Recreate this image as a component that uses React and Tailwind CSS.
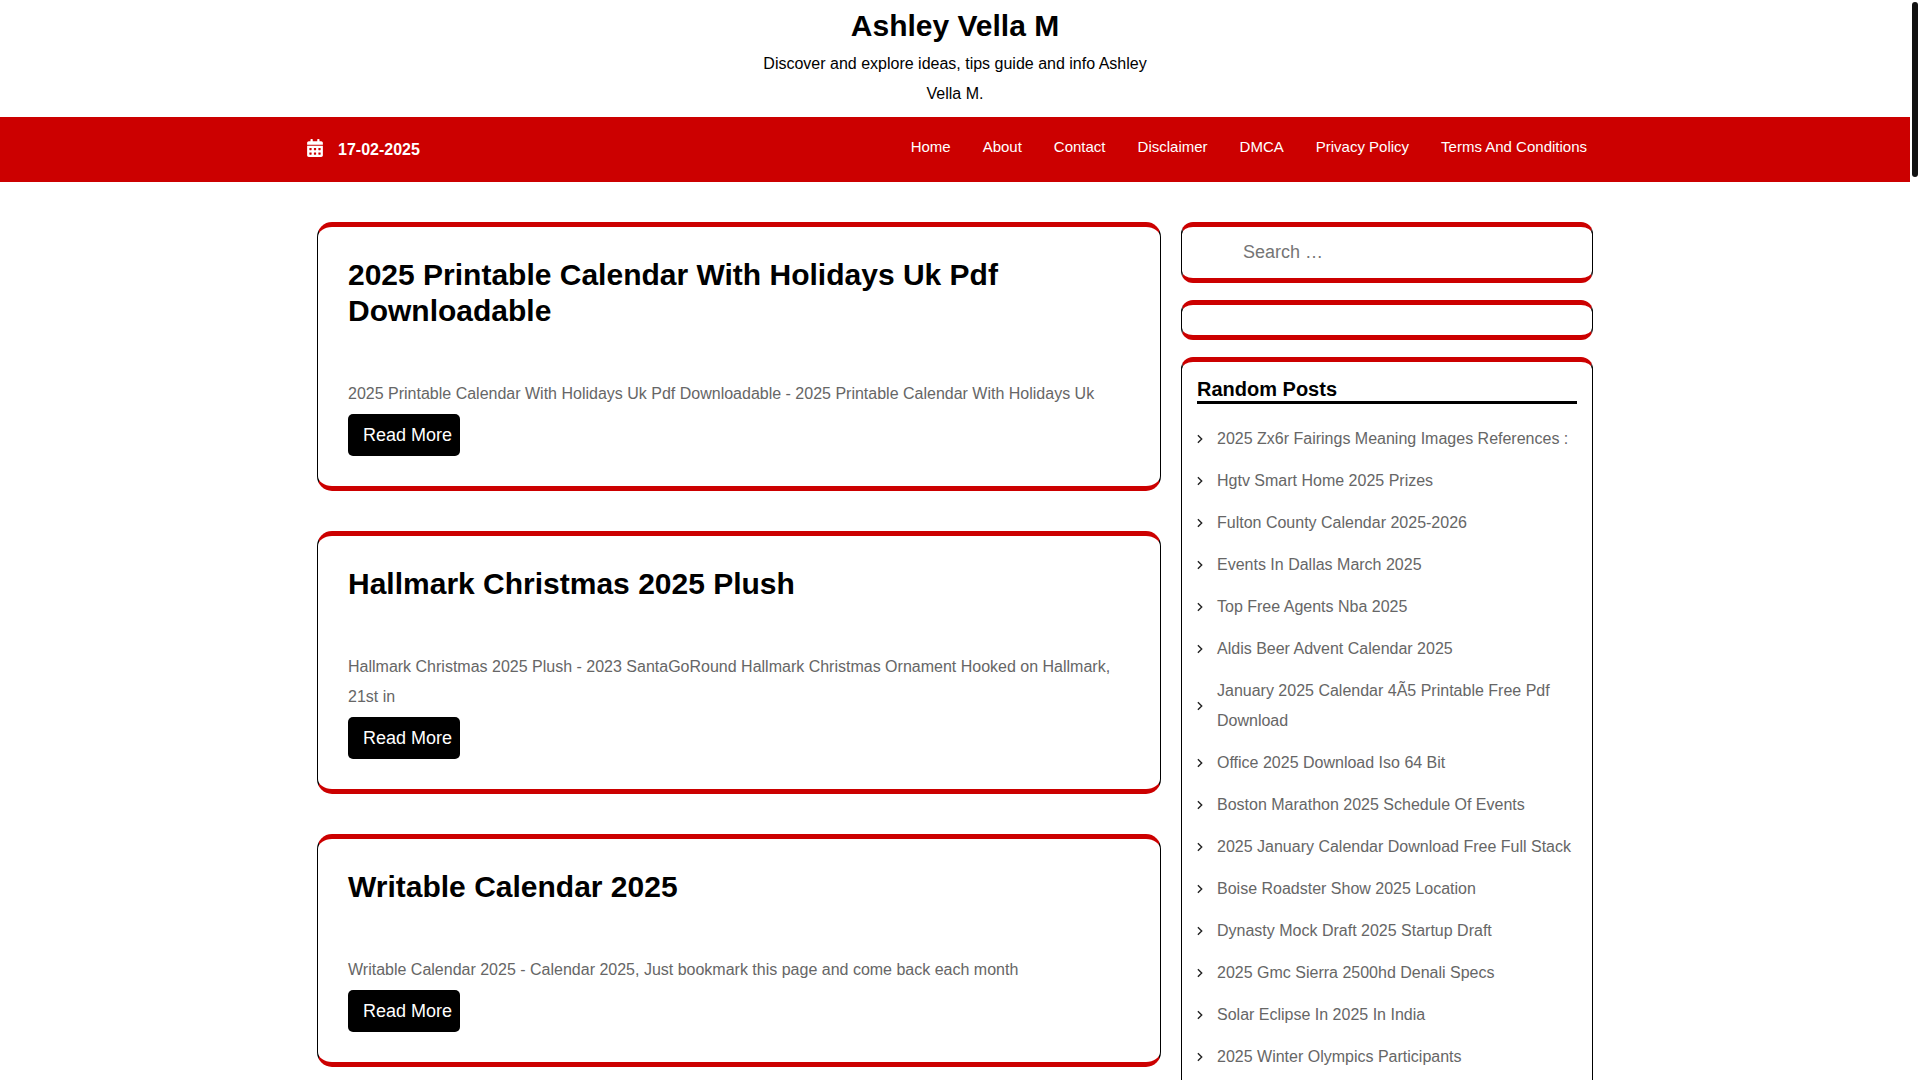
import { FaCalendarAlt } from "react-icons/fa";

const menu = [
  "Home",
  "About",
  "Contact",
  "Disclaimer",
  "DMCA",
  "Privacy Policy",
  "Terms And Conditions",
];

const posts = [
  {
    title: "2025 Printable Calendar With Holidays Uk Pdf Downloadable",
    excerpt:
      "2025 Printable Calendar With Holidays Uk Pdf Downloadable - 2025 Printable Calendar With Holidays Uk",
  },
  {
    title: "Hallmark Christmas 2025 Plush",
    excerpt:
      "Hallmark Christmas 2025 Plush - 2023 SantaGoRound Hallmark Christmas Ornament Hooked on Hallmark, 21st in",
  },
  {
    title: "Writable Calendar 2025",
    excerpt:
      "Writable Calendar 2025 - Calendar 2025, Just bookmark this page and come back each month",
  },
];

const randomPosts = [
  "2025 Zx6r Fairings Meaning Images References :",
  "Hgtv Smart Home 2025 Prizes",
  "Fulton County Calendar 2025-2026",
  "Events In Dallas March 2025",
  "Top Free Agents Nba 2025",
  "Aldis Beer Advent Calendar 2025",
  "January 2025 Calendar 4Ã5 Printable Free Pdf Download",
  "Office 2025 Download Iso 64 Bit",
  "Boston Marathon 2025 Schedule Of Events",
  "2025 January Calendar Download Free Full Stack",
  "Boise Roadster Show 2025 Location",
  "Dynasty Mock Draft 2025 Startup Draft",
  "2025 Gmc Sierra 2500hd Denali Specs",
  "Solar Eclipse In 2025 In India",
  "2025 Winter Olympics Participants",
];

function Header() {
  return (
    <header>
      <div className="mx-auto max-w-[408px] py-2 text-center text-black">
        <h1 className="mb-[5px] text-[30px] leading-9 font-bold">
          <a href="#">Ashley Vella M</a>
        </h1>
        <p className="text-base leading-[30px]">
          Discover and explore ideas, tips guide and info Ashley Vella M.
        </p>
      </div>
      <div className="bg-[#cc0000] text-white">
        <div className="mx-auto flex min-h-[65px] max-w-[1320px] items-center justify-between px-3">
          <div className="flex items-center gap-[15px] text-base leading-[30px] font-bold">
            <FaCalendarAlt className="mb-[3px] h-[18px] w-4" />
            <span>17-02-2025</span>
          </div>
          <nav className="pb-[5px]">
            <ul className="flex flex-wrap text-[15px] leading-[30px]">
              {menu.map((item) => (
                <li key={item}>
                  <a href="#" className="block px-4">
                    {item}
                  </a>
                </li>
              ))}
            </ul>
          </nav>
        </div>
      </div>
    </header>
  );
}

function PostCard({ title, excerpt }) {
  return (
    <article className="rounded-[15px] border-x border-y-[5px] border-x-black border-y-[#cc0000] p-[30px]">
      <h2 className="mb-[50px] text-[30px] leading-9 font-bold text-black">
        <a href="#">{title}</a>
      </h2>
      <p className="mb-[5px] text-base leading-[30px] text-[#666666]">
        {excerpt}
      </p>
      <a
        href="#"
        className="block w-fit rounded-[5px] bg-black py-[6px] pr-2 pl-[15px] text-lg leading-[30px] text-white"
      >
        Read More
      </a>
    </article>
  );
}

function Widget({ children }) {
  return (
    <section className="rounded-xl border-x border-y-[5px] border-x-black border-y-[#cc0000] p-[15px]">
      {children}
    </section>
  );
}

function Chevron() {
  return (
    <svg
      viewBox="0 0 6 10"
      className="h-[10px] w-[6px] shrink-0"
      fill="none"
      stroke="#222222"
      strokeWidth="1.4"
      aria-hidden="true"
    >
      <path d="M0.9 1.2 L4.7 5 L0.9 8.8" />
    </svg>
  );
}

function Sidebar() {
  return (
    <aside className="flex w-1/3 flex-col gap-[17px] px-[10px]">
      <Widget>
        <form role="search">
          <input
            type="search"
            aria-label="Search for:"
            placeholder="Search …"
            className="block h-[21px] w-full pl-[46px] text-lg leading-[21px] outline-none placeholder:text-[#757575]"
          />
        </form>
      </Widget>
      <Widget />
      <Widget>
        <h3 className="mb-5 border-b-[3px] border-black text-xl leading-6 font-bold text-black">
          Random Posts
        </h3>
        <ul className="text-base leading-[30px] text-[#666666]">
          {randomPosts.map((post) => (
            <li key={post} className="mb-3 flex items-center gap-[14px]">
              <Chevron />
              <a href="#">{post}</a>
            </li>
          ))}
        </ul>
      </Widget>
    </aside>
  );
}

export default function App() {
  return (
    <div className="h-screen overflow-y-auto bg-white pr-[10px] font-['Liberation_Sans',Arial,sans-serif] [scrollbar-width:none]">
      <Header />
      <div className="mx-auto flex max-w-[1320px] items-start px-3 py-10">
        <main className="flex w-2/3 flex-col gap-10 px-[10px]">
          {posts.map((post) => (
            <PostCard key={post.title} {...post} />
          ))}
        </main>
        <Sidebar />
      </div>
      {/* scrollbar thumb */}
      <div className="fixed top-[2px] right-[2px] h-[175px] w-[6px] rounded-full bg-[#111111]" />
    </div>
  );
}
